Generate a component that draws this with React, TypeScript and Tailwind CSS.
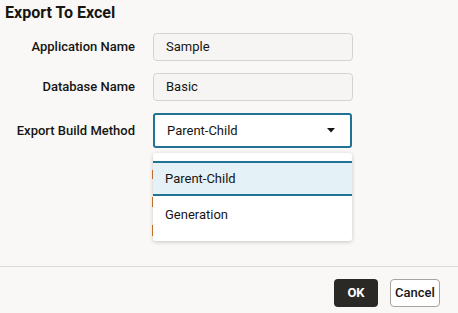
function Field({ label, value }: { label: string; value: string }) {
  return (
    <div className="flex items-center h-[28px]">
      <div className="w-[136px] pr-[1px] text-right text-[13px] font-medium text-[#161513]">{label}</div>
      <div className="ml-[17px] w-[200px] h-[28px] flex items-center px-[12px] rounded-[4px] border border-[#d6d3cf] bg-[#f6f5f3] text-[13px] text-[#161513]">
        {value}
      </div>
    </div>
  );
}

export default function App() {
  return (
    <div
      className="w-[458px] h-[313px] bg-[#f9f8f6] flex flex-col overflow-hidden"
      style={{ fontFamily: 'Roboto, "Noto Sans", sans-serif' }}
    >
      <h1 className="pl-[5px] pt-[2px] h-[24px] text-[16px] leading-[22px] font-bold text-[#161513]">Export To Excel</h1>

      <div className="mt-[9px] flex flex-col gap-[12px]">
        <Field label="Application Name" value="Sample" />
        <Field label="Database Name" value="Basic" />

        <div className="relative">
          <div className="flex items-center h-[35px]">
            <div className="w-[136px] pr-[1px] text-right text-[13px] font-medium text-[#161513]">Export Build Method</div>
            <div className="ml-[17px] w-[199px] h-[35px] flex items-center justify-between pl-[12px] pr-[15px] rounded-[3px] border-2 border-[#227393] bg-white text-[13px] text-[#161513]">
              <span>Parent-Child</span>
              <svg width="8" height="5" viewBox="0 0 8 5">
                <path d="M0 0 L8 0 L4 4.5 Z" fill="#161513" />
              </svg>
            </div>
          </div>

          <div className="ml-[152px] mt-[22px] flex flex-col gap-[18px]">
            <div className="w-[2px] h-[9px] bg-[#d0782c]" />
            <div className="w-[2px] h-[10px] bg-[#d0782c]" />
            <div className="w-[2px] h-[11px] bg-[#d0782c]" />
          </div>

          <div className="absolute left-[153px] top-[40px] w-[199px] h-[88px] bg-white rounded-[3px] shadow-[0_1px_4px_rgba(0,0,0,0.2)] pt-[8px] text-[13px] text-[#161513]">
            <div className="h-[35px] flex items-center px-[12px] bg-[#e4f1f7] border-t-2 border-b-2 border-[#227393]">Parent-Child</div>
            <div className="h-[37px] flex items-center px-[12px]">Generation</div>
          </div>
        </div>
      </div>

      <div className="mt-auto">
        <div className="h-px bg-[#dedbd7]" />
        <div className="flex justify-end gap-[12px] pt-[12px] pb-[6px] pr-[18px]">
          <button className="w-[44px] h-[28px] rounded-[4px] bg-[#2b2926] text-white text-[13px] font-bold">OK</button>
          <button className="w-[50px] h-[28px] rounded-[4px] border border-[#a7a39e] bg-white text-[13px] font-medium text-[#161513]">Cancel</button>
        </div>
      </div>
    </div>
  );
}
